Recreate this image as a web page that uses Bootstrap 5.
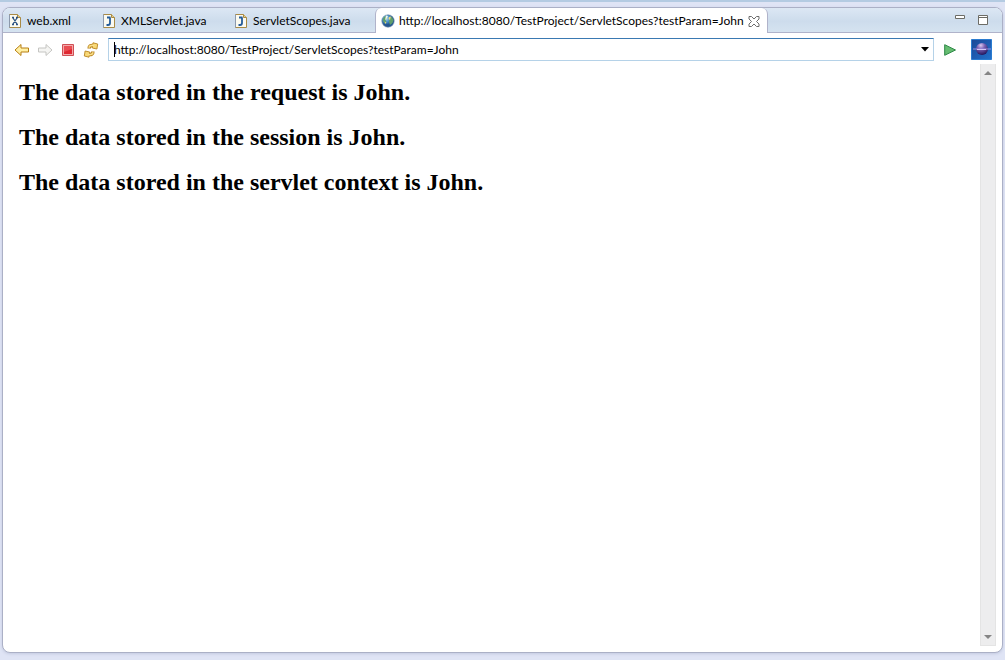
<!DOCTYPE html>
<html lang="en">
<head>
<meta charset="utf-8">
<meta name="viewport" content="width=device-width, initial-scale=1">
<title>ServletScopes</title>
<link href="https://cdn.jsdelivr.net/npm/bootstrap@5.3.0/dist/css/bootstrap.min.css" rel="stylesheet">
<style>
  body { background: #dfe4f5; font-family: Lato, "Noto Sans", sans-serif; font-size: 12px; line-height: 16px; color: #000; border-top: 2px solid #b4cbe2; }
  .editor-shell { padding: 5px 2px 7px; }
  .editor-frame { border: 1px solid #abb0c6; border-radius: 8px; box-shadow: 0 1px 3px #c3cae0; overflow: hidden; }
  .tab-strip { height: 25px; background: linear-gradient(#dce7f4, #cddcec 55%, #d5e3f0); border-bottom: 1px solid #b0b3ca; }
  .editor-tab { display: flex; align-items: center; gap: 6px; height: 25px; padding: 1px 6px 0; border: 0; background: none; color: #000; white-space: nowrap; text-align: left; }
  .tab-short { width: 94px; }
  .tab-mid { width: 132px; }
  .tab-long { width: 146px; }
  .tab-open { gap: 4px; padding: 1px 7px 0 5px; background: #fff; border: 1px solid #b0b3ca; border-width: 0 1px; border-radius: 6px 6px 0 0; }
  .plain-btn { border: 0; background: none; padding: 0; display: flex; align-items: center; justify-content: center; color: inherit; }
  .tool-row { padding: 5px 10px 3px 11px; height: 31px; }
  .url-box { height: 23px; border: 1px solid #b5d2e8; border-top-color: #3a79b2; background: #fff; }
  .url-box input { border: 0; outline: 0; padding: 0 5px; height: 21px; background: none; color: #000; min-width: 0; }
  .text-caret { left: 5px; top: 3px; width: 1px; height: 15px; background: #000; }
  .page-view { font-family: "Liberation Serif", serif; padding: 15px 16px; }
  .page-view h2 { font-size: 24px; line-height: 27px; font-weight: 700; margin: 0 0 18px; }
  .scroll-rail { width: 16px; margin: 0 6px 6px 0; background: #ededee; border: 1px solid #e4e4e4; border-width: 0 1px 1px; }
  .scroll-rail button { height: 17px; }
  svg { display: block; flex: none; }
</style>
</head>
<body class="vh-100 d-flex flex-column">
<svg width="0" height="0" class="position-absolute" aria-hidden="true">
  <defs>
    <g id="page-shape"><path d="M.5.5h8l3 3v10H.5z" fill="#fbfaf0" stroke="#a98a45"/><path d="M.5 13.500V.5" stroke="#8c99ac" fill="none"/><path d="M8.500.5v3h3" fill="#e3cf91" stroke="#a98a45"/></g>
    <g id="java-file"><use href="#page-shape"/><path d="M4 3.500h3.500M7 3.500v5.500q0 2-2 2H3.500" fill="none" stroke="#245c9a" stroke-width="1.800"/></g>
    <g id="turn-arrow" stroke-linejoin="round"><path d="M6.200 6.500Q6 3 10.500 3.500" fill="none" stroke="#b98420" stroke-width="3.600"/><path d="M10 .8L14.700 2l-.8 5-4.600-1z" fill="#f8d876" stroke="#b98420" stroke-width=".9"/><path d="M6.200 5.800Q6 3 11 3.500" fill="none" stroke="#fbe08a" stroke-width="1.700"/></g>
  </defs>
</svg>
<div class="editor-shell flex-grow-1 d-flex flex-column">
  <main class="editor-frame bg-white flex-grow-1 d-flex flex-column">
    <div class="tab-strip d-flex">
      <div class="d-flex" role="tablist">
        <button class="editor-tab tab-short" role="tab"><svg width="12" height="14"><use href="#page-shape"/><path d="M3 3.500h2M7 3.500h2M3 10.500h2M7 10.500h2M4 4l4 6M8 4l-4 6" fill="none" stroke="#2e5483" stroke-width="1.300"/></svg>web.xml</button>
        <button class="editor-tab tab-mid" role="tab"><svg width="12" height="14"><use href="#java-file"/></svg>XMLServlet.java</button>
        <button class="editor-tab tab-long" role="tab"><svg width="12" height="14"><use href="#java-file"/></svg>ServletScopes.java</button>
        <div class="editor-tab tab-open" role="tab" aria-selected="true">
          <svg width="14" height="14"><defs><radialGradient id="sea" cx=".35" cy=".3"><stop offset="0" stop-color="#b9def2"/><stop offset=".55" stop-color="#4a93cb"/><stop offset="1" stop-color="#24558f"/></radialGradient></defs><circle cx="7" cy="7" r="6.200" fill="url(#sea)" stroke="#6f8ba8" stroke-width=".6"/><path d="M2 4.500Q3.500 2 5 2l1 2-1.500 2 1 2-1.500 1.500L2 7zM8.500 5l2-2.500L12.500 6l-1 3L9 11 8 8z" fill="#5f9f6b"/><path d="M5 1.500l2 .5-1.500 3L4 6z" fill="#eef4e5"/><path d="M8 3l2-.5L9 6 7.500 5zM3.500 7.500l2 1-1 1.500z" fill="#e8d67a"/></svg>
          <span>http://localhost:8080/TestProject/ServletScopes?testParam=John</span>
          <button class="plain-btn ms-auto" aria-label="Close"><svg width="12" height="11"><path d="M1 .5h2.500L6 3 8.500.5H11v2.500L8.500 5.500 11 8v2.500H8.500L6 8l-2.500 2.500H1V8l2.500-2.500L1 3z" fill="#fff" stroke="#6d6d6d"/></svg></button>
        </div>
      </div>
      <div class="d-flex ms-auto gap-2 pe-2">
        <button class="plain-btn" aria-label="Minimize"><svg width="17" height="12"><path d="M2.500 1.500h9v3h-9z" fill="#fff" stroke="#6c6c66"/></svg></button>
        <button class="plain-btn pe-1" aria-label="Maximize"><svg width="12" height="10"><path d="M.5.5h9v9h-9z" fill="#fff" stroke="#6c6c66"/><path d="M.5 2.500h9" stroke="#6c6c66"/></svg></button>
      </div>
    </div>
    <div class="tool-row d-flex align-items-center">
      <div class="d-flex gap-2 align-items-center">
        <button class="plain-btn" aria-label="Back"><svg width="15" height="14"><path d="M1 7l6-5.500V5h7.500v4H7v3.500z" fill="#fff0a5" stroke="#b77e12"/></svg></button>
        <button class="plain-btn" aria-label="Forward"><svg width="16" height="14"><path d="M15 7L9 1.500V5H1.500v4H9v3.500z" fill="#f5f5f3" stroke="#c5c5c2"/></svg></button>
        <button class="plain-btn" aria-label="Stop"><svg width="14" height="14"><path d="M1.500 1.500h11v11h-11z" fill="#f3a9ab" stroke="#cf5055"/><path d="M3 3h8v8H3z" fill="#df2831"/><path d="M3 3h8v3L3 9z" fill="#e94d52"/></svg></button>
        <button class="plain-btn" aria-label="Refresh"><svg width="17" height="16"><use href="#turn-arrow"/><use href="#turn-arrow" transform="rotate(180 8 8)"/></svg></button>
      </div>
      <div class="url-box flex-grow-1 d-flex position-relative ms-2">
        <input class="flex-grow-1" type="text" aria-label="Address" value="http://localhost:8080/TestProject/ServletScopes?testParam=John">
        <span class="text-caret position-absolute"></span>
        <button class="plain-btn px-1" aria-label="Address history"><svg width="8" height="5"><path d="M0 0h8L4 4.500z"/></svg></button>
      </div>
      <button class="plain-btn ms-2 pe-2" aria-label="Go"><svg width="15" height="12"><path d="M2.700.700L13.500 6 2.700 11.300z" fill="#66bd71" stroke="#2c8746"/></svg></button>
      <svg class="ms-1" width="23" height="21" viewBox="1 0 23 21" role="img" aria-label="Eclipse"><defs><radialGradient id="orb" cx=".4" cy=".2" r=".8"><stop offset="0" stop-color="#d9c8ee"/><stop offset=".4" stop-color="#7a62b4"/><stop offset="1" stop-color="#24165c"/></radialGradient><linearGradient id="sky" x2="1" y2="1"><stop offset="0" stop-color="#1b4795"/><stop offset="1" stop-color="#2272cc"/></linearGradient></defs><path d="M3.500.5h20v20h-20z" fill="url(#sky)" stroke="#2b7cd0"/><circle cx="14" cy="10" r="6" fill="url(#orb)"/><path d="M5 10h18" stroke="#9a8fe0"/><path d="M9 10.500h9" stroke="#d5c8f5"/></svg>
    </div>
    <div class="d-flex flex-grow-1">
      <section class="page-view flex-grow-1">
        <h2>The data stored in the request is John.</h2>
        <h2>The data stored in the session is John.</h2>
        <h2>The data stored in the servlet context is John.</h2>
      </section>
      <div class="scroll-rail d-flex flex-column justify-content-between">
        <button class="plain-btn" aria-label="Scroll up"><svg width="8" height="4"><path d="M4 0l4 4H0z" fill="#858585"/></svg></button>
        <button class="plain-btn" aria-label="Scroll down"><svg width="8" height="4"><path d="M0 0h8L4 4z" fill="#858585"/></svg></button>
      </div>
    </div>
  </main>
</div>
<script src="https://cdn.jsdelivr.net/npm/bootstrap@5.3.0/dist/js/bootstrap.bundle.min.js"></script>
</body>
</html>
